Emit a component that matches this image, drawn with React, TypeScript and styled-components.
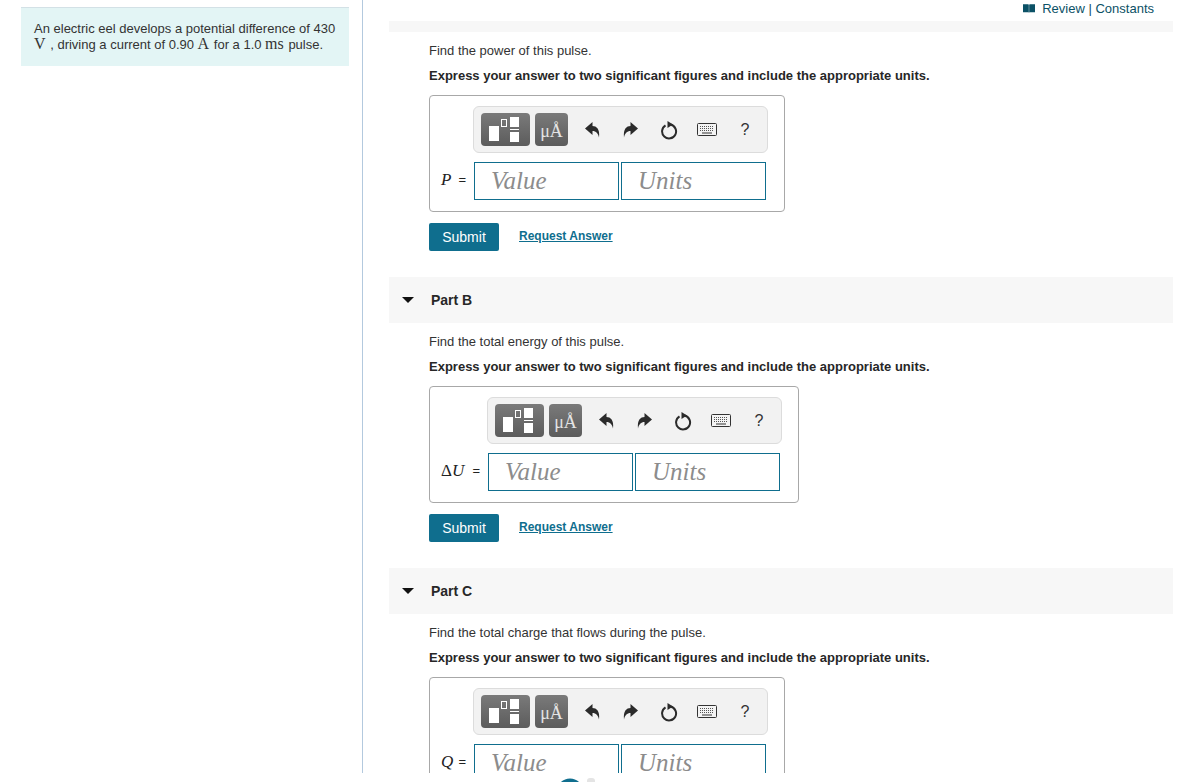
import React from "react";
import styled, { createGlobalStyle } from "styled-components";

const Global = createGlobalStyle`
  html, body { margin: 0; padding: 0; background: #fff; }
  body { font-family: "Liberation Sans", Arial, sans-serif; color: #272727; }
`;

const Page = styled.div`
  width: 1184px;
  height: 782px;
  overflow: hidden;
`;
const Clip = styled.div`
  height: 773px;
  overflow: hidden;
  display: grid;
  grid-template-columns: 363px 1fr;
`;
const Side = styled.aside`
  border-right: 1px solid #b3c9de;
  padding: 7px 13px 0 21px;
`;
const Intro = styled.div`
  height: 58px;
  background: #e3f5f5;
  border-top: 1px solid #d3e1e6;
  padding: 0 13px;
  font-size: 13px;
  line-height: 16px;
  color: #333;
`;
const IntroText = styled.p`
  margin: 0;
  padding-top: 13px;
`;
const MathR = styled.span`
  font-family: "Liberation Serif", "DejaVu Serif", serif;
  font-size: 16px;
  line-height: 0;
  margin-right: 1px;
`;
const Main = styled.main`
  padding: 0 11px 0 26px;
`;
const TopLinks = styled.div`
  height: 21px;
  display: flex;
  justify-content: flex-end;
  align-items: flex-start;
  padding-right: 19px;
  gap: 7px;
  font-size: 13px;
  line-height: 17px;
  color: #0b5166;
`;
const Book = styled.svg`
  margin-top: 4px;
`;
const PartHead = styled.div<{ $stub?: boolean }>`
  height: ${(p) => (p.$stub ? 11 : 46)}px;
  background: #f7f7f7;
  display: flex;
  align-items: center;
  font-size: 14px;
  font-weight: bold;
  color: #272727;
`;
const Caret = styled.span`
  width: 0;
  height: 0;
  margin-left: 13px;
  margin-right: 17px;
  border-left: 6px solid transparent;
  border-right: 6px solid transparent;
  border-top: 6px solid #111;
`;
const Body = styled.section`
  padding: 11px 0 26px 40px;
`;
const Prompt = styled.p`
  margin: 0;
  height: 25px;
  font-size: 13px;
  line-height: 16px;
  color: #333;
`;
const Instruction = styled(Prompt)`
  font-weight: bold;
  height: 27px;
  color: #272727;
`;
const AnswerBox = styled.div`
  display: inline-grid;
  grid-template-columns: auto auto;
  column-gap: 8px;
  row-gap: 9px;
  border: 1px solid #a8a8a8;
  border-radius: 4px;
  padding: 10px 18px 11px 11px;
  align-items: center;
  vertical-align: top;
`;
const Toolbar = styled.div`
  grid-column: 2;
  margin-left: -1px;
  margin-right: -2px;
  width: 286px;
  height: 45px;
  border: 1px solid #dcdcdc;
  border-radius: 6px;
  background: #f2f2f2;
  display: flex;
  align-items: center;
  padding-left: 7px;
`;
const Palette = styled.div<{ $w: number }>`
  width: ${(p) => p.$w}px;
  height: 33px;
  margin-right: 5px;
  border-radius: 4px;
  background: linear-gradient(#7a7a7a, #5c5c5c);
  display: flex;
  align-items: center;
  justify-content: center;
  flex: none;
`;
const UnitGlyph = styled.span`
  font-family: "Liberation Serif", serif;
  font-size: 18px;
  color: #e4e4e4;
  line-height: 1;
  margin-top: 3px;
`;
const ToolIcon = styled.span<{ $w: number }>`
  width: ${(p) => p.$w}px;
  display: flex;
  justify-content: center;
  align-items: center;
  flex: none;
  color: #333;
`;
const Help = styled.span`
  font-size: 16px;
  color: #333;
`;
const Label = styled.div<{ $w: number }>`
  width: ${(p) => p.$w}px;
  display: flex;
  justify-content: space-between;
  font-family: "Liberation Serif", serif;
  font-size: 17px;
  color: #222;
  white-space: nowrap;
  line-height: 34px;
  padding-bottom: 2px;
`;
const Eq = styled.span`
  font-family: "Liberation Sans", sans-serif;
  font-size: 13px;
`;
const Inputs = styled.div`
  display: flex;
  gap: 2px;
`;
const Field = styled.div`
  height: 36px;
  width: 127px;
  border: 1px solid #0f6e8e;
  padding-left: 16px;
  font-family: "Liberation Serif", serif;
  font-style: italic;
  font-size: 25px;
  line-height: 35px;
  color: #8c8c8c;
`;
const Actions = styled.div`
  margin-top: 11px;
  display: flex;
  align-items: center;
  gap: 20px;
`;
const Submit = styled.button`
  width: 70px;
  height: 28px;
  border: 0;
  border-radius: 2px;
  background: #0f6e8e;
  color: #fff;
  font-family: "Liberation Sans", sans-serif;
  font-size: 14px;
  padding: 0;
`;
const RequestLink = styled.a`
  font-size: 12px;
  font-weight: bold;
  color: #0f6e8e;
  text-decoration: underline;
  margin-top: -2px;
`;
const Footer = styled.div`
  height: 9px;
  padding-left: 557px;
  overflow: hidden;
`;

const TemplateIcon = () => (
  <svg width="34" height="26" viewBox="0 0 34 26">
    <rect x="0" y="9" width="10" height="15" fill="#fff" />
    <rect x="12.500" y="2.500" width="5" height="7" fill="none" stroke="#fff" strokeWidth="1" />
    <rect x="21" y="0" width="9" height="10" fill="#fff" />
    <rect x="21" y="12" width="9" height="1" fill="#fff" />
    <rect x="21" y="15" width="9" height="10" fill="#fff" />
  </svg>
);
const BookIcon = () => (
  <Book width="12" height="9" viewBox="0 0 13 9">
    <path d="M0 0h5.500c.5 0 .8.2.8.5V9C6 8.600 5.600 8.500 5 8.500H0zM13 0H7.500c-.5 0-.8.2-.8.5V9c.3-.4.7-.5 1.300-.5H13z" fill="#0b5166" />
  </Book>
);
const Undo = ({ flip }: { flip?: boolean }) => (
  <svg width="15" height="16" viewBox="0 0 15 16" style={flip ? { transform: "scaleX(-1)" } : undefined}>
    <path d="M0 6.500 7.500 0V4C11.500 4 15 7 14 15.500 13.200 11.500 11 9 7.500 9V13Z" fill="#2b2b2b" />
  </svg>
);
const Reset = () => (
  <svg width="18" height="20" viewBox="0 0 18 20">
    <path d="M10.500 4.600A7 7 0 1 1 5.500 5.440" fill="none" stroke="#2b2b2b" strokeWidth="2" />
    <path d="M7.500 1 13 4.500 7.500 8z" fill="#2b2b2b" />
  </svg>
);
const Keyboard = () => (
  <svg width="20" height="13" viewBox="0 0 20 13">
    <rect x="0.500" y="0.500" width="19" height="12" rx="1" fill="#f4f4f4" stroke="#333" />
    <path d="M3 3.500h14M3 5.500h14M3 7.500h14" stroke="#555" strokeWidth="1" strokeDasharray="1 1" />
    <path d="M5 10h10" stroke="#333" strokeWidth="1" />
  </svg>
);

const Answer = ({ sym, delta }: { sym: string; delta?: boolean }) => (
  <AnswerBox>
    <Toolbar>
      <Palette $w={49}>
        <TemplateIcon />
      </Palette>
      <Palette $w={33}>
        <UnitGlyph>μÅ</UnitGlyph>
      </Palette>
      <ToolIcon $w={38}>
        <Undo />
      </ToolIcon>
      <ToolIcon $w={38}>
        <Undo flip />
      </ToolIcon>
      <ToolIcon $w={39}>
        <Reset />
      </ToolIcon>
      <ToolIcon $w={38}>
        <Keyboard />
      </ToolIcon>
      <ToolIcon $w={38}>
        <Help>?</Help>
      </ToolIcon>
    </Toolbar>
    <Label $w={delta ? 39 : 25}>
      <span>
        {delta ? "Δ" : ""}
        <i>{sym}</i>
      </span>
      <Eq>=</Eq>
    </Label>
    <Inputs>
      <Field>Value</Field>
      <Field>Units</Field>
    </Inputs>
  </AnswerBox>
);

const Part = ({ prompt, sym, delta, actions = true }: { prompt: string; sym: string; delta?: boolean; actions?: boolean }) => (
  <Body>
    <Prompt>{prompt}</Prompt>
    <Instruction>Express your answer to two significant figures and include the appropriate units.</Instruction>
    <Answer sym={sym} delta={delta} />
    {actions && (
      <Actions>
        <Submit>Submit</Submit>
        <RequestLink>Request Answer</RequestLink>
      </Actions>
    )}
  </Body>
);

export default function App() {
  return (
    <Page>
      <Global />
      <Clip>
        <Side>
          <Intro>
            <IntroText>
              An electric eel develops a potential difference of 430 <MathR>V</MathR> , driving a current of 0.90{" "}
              <MathR>A</MathR> for a 1.0 <MathR>ms</MathR> pulse.
            </IntroText>
          </Intro>
        </Side>
        <Main>
          <TopLinks>
            <BookIcon />
            <span>Review | Constants</span>
          </TopLinks>
          <PartHead $stub />
          <Part prompt="Find the power of this pulse." sym="P" />
          <PartHead>
            <Caret />
            Part B
          </PartHead>
          <Part prompt="Find the total energy of this pulse." sym="U" delta />
          <PartHead>
            <Caret />
            Part C
          </PartHead>
          <Part prompt="Find the total charge that flows during the pulse." sym="Q" actions={false} />
        </Main>
      </Clip>
      <Footer>
        <svg width="40" height="9" viewBox="0 0 40 9">
          <circle cx="13" cy="14" r="11.500" fill="none" stroke="#0f6e8e" strokeWidth="4" />
          <rect x="30" y="0" width="8" height="9" rx="3" fill="#e4e4e4" />
        </svg>
      </Footer>
    </Page>
  );
}
